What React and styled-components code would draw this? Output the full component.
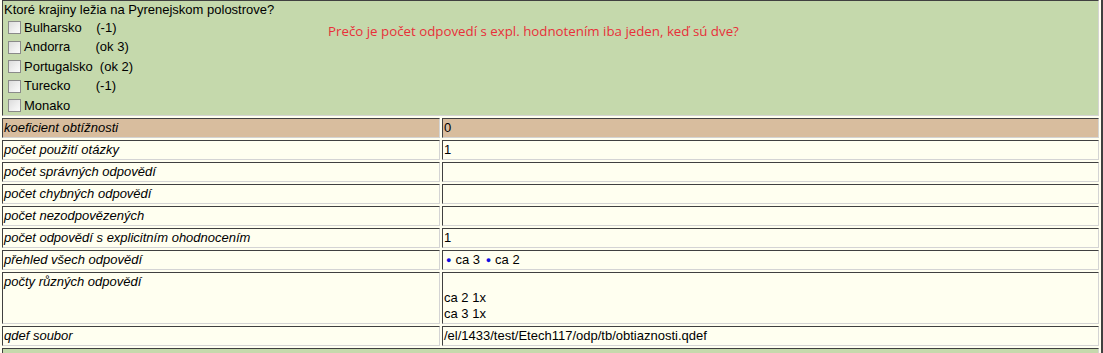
import React from "react";
import styled, { createGlobalStyle } from "styled-components";

const Global = createGlobalStyle`
  html, body { margin: 0; padding: 0; background: #fffff0; }
  body { font-family: "Liberation Sans", Arial, sans-serif; font-size: 13px; color: #000; }
`;

const Table = styled.div`
  width: 1103px;
  box-sizing: border-box;
  padding: 0 2px 0 2px;
  border-right: 2px solid #404040;
  background: #fffff0;
  display: grid;
  grid-template-columns: 438px 1fr;
  gap: 2px;
  overflow: hidden;
`;

const Cell = styled.div`
  box-sizing: border-box;
  border-style: solid;
  border-width: 1px;
  border-color: #404040 #d4d4d4 #d4d4d4 #404040;
  padding: 1px;
  line-height: 16px;
  background: ${(p) => p.$bg || "#fffff0"};
  font-style: ${(p) => (p.$italic ? "italic" : "normal")};
  grid-column: ${(p) => (p.$span ? "1 / -1" : "auto")};
  min-height: 20px;
  white-space: nowrap;
`;

const QuestionCell = styled(Cell)`
  padding-bottom: 0;
  height: 116px;
`;

const Heading = styled.div`
  height: 16px;
`;

const Body = styled.div`
  display: flex;
`;

const Options = styled.div`
  width: 320px;
  display: flex;
  flex-direction: column;
`;

const Option = styled.label`
  display: flex;
  align-items: center;
  height: 19.5px;
  white-space: pre;
`;

const Box = styled.span`
  display: inline-block;
  box-sizing: border-box;
  width: 13px;
  height: 13px;
  margin: 0 3px 0 4px;
  border: 1px solid #8a8a8a;
  background: linear-gradient(135deg, #dcdcdc 0%, #f0f0f0 60%, #fbfbfb 100%);
`;

const Note = styled.div`
  margin-top: 5px;
  margin-left: 4px;
  font-family: "Open Sans", "Noto Sans", sans-serif;
  font-size: 13.3px;
  line-height: 16px;
  color: #e8303a;
`;

const Bullet = styled.span`
  color: #1010e0;
  font-size: 9px;
  display: inline-block;
  margin: 0 4px 0 2px;
  vertical-align: 1px;
`;

const Stack = styled(Cell)`
  display: flex;
  flex-direction: column;
`;

const options = [
  "Bulharsko    (-1)",
  "Andorra       (ok 3)",
  "Portugalsko  (ok 2)",
  "Turecko       (-1)",
  "Monako",
];

const rows = [
  { label: "koeficient obtížnosti", value: "0", bg: "#d8bd9e" },
  { label: "počet použití otázky", value: "1" },
  { label: "počet správných odpovědí", value: "" },
  { label: "počet chybných odpovědí", value: "" },
  { label: "počet nezodpovězených", value: "" },
  { label: "počet odpovědí s explicitním ohodnocením", value: "1" },
];

export default function App() {
  return (
    <>
      <Global />
      <Table>
        <QuestionCell $span $bg="#c5d9ac">
          <Heading>Ktoré krajiny ležia na Pyrenejskom polostrove?</Heading>
          <Body>
            <Options>
              {options.map((o) => (
                <Option key={o}>
                  <Box />
                  {o}
                </Option>
              ))}
            </Options>
            <Note>Prečo je počet odpovedí s expl. hodnotením iba jeden, keď sú dve?</Note>
          </Body>
        </QuestionCell>
        {rows.map((r) => (
          <React.Fragment key={r.label}>
            <Cell $italic $bg={r.bg}>{r.label}</Cell>
            <Cell $bg={r.bg}>{r.value}</Cell>
          </React.Fragment>
        ))}
        <Cell $italic>přehled všech odpovědí</Cell>
        <Cell>
          <Bullet>●</Bullet>ca 3 <Bullet>●</Bullet>ca 2
        </Cell>
        <Cell $italic>počty různých odpovědí</Cell>
        <Stack>
          <span>&nbsp;</span>
          <span>ca 2 1x</span>
          <span>ca 3 1x</span>
        </Stack>
        <Cell $italic>qdef soubor</Cell>
        <Cell>/el/1433/test/Etech117/odp/tb/obtiaznosti.qdef</Cell>
        <Cell $span $bg="#c5d9ac" />
      </Table>
    </>
  );
}
